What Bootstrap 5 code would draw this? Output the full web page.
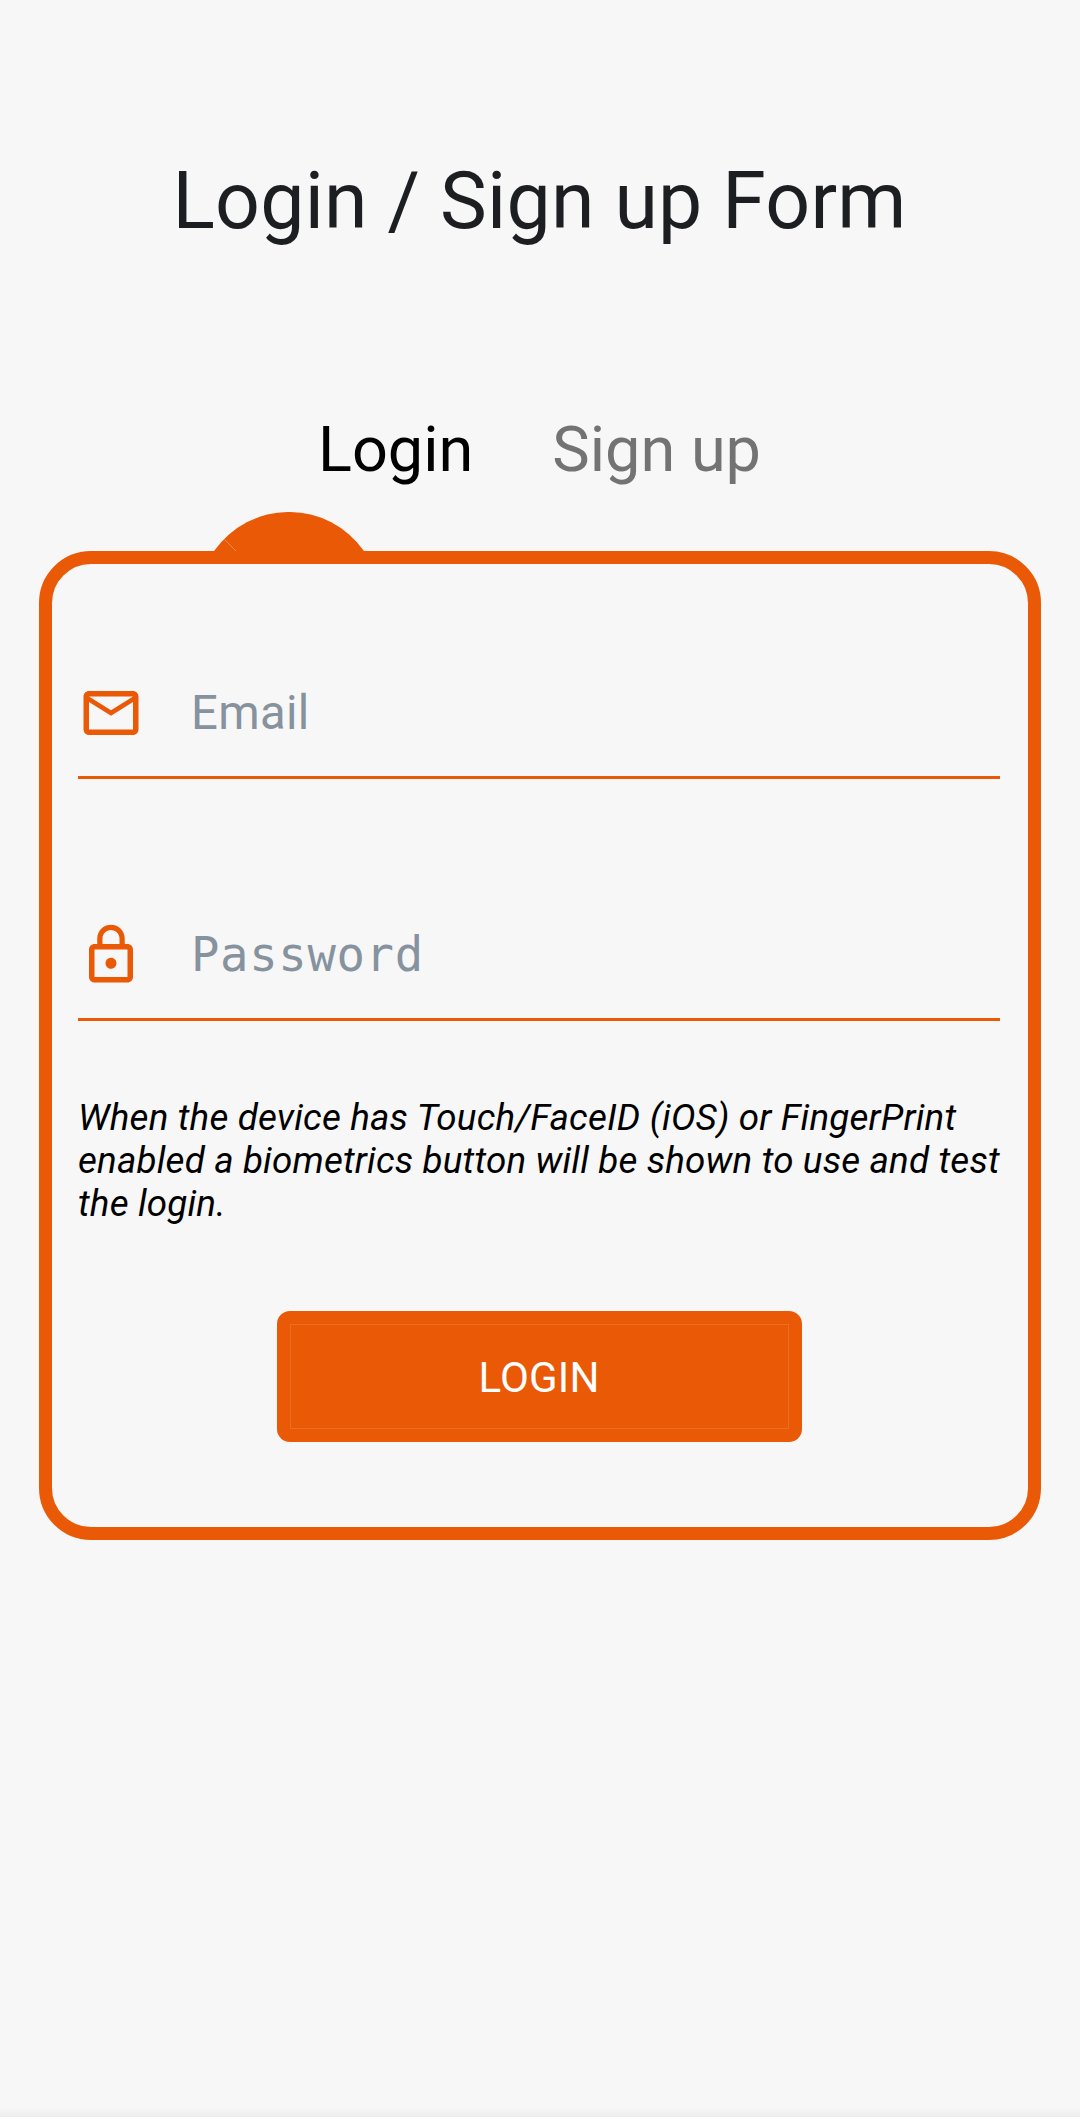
<!DOCTYPE html>
<html lang="en">
<head>
<meta charset="utf-8">
<meta name="viewport" content="width=device-width, initial-scale=1">
<title>Login / Sign up Form</title>
<link href="https://cdn.jsdelivr.net/npm/bootstrap@5.3.0/dist/css/bootstrap.min.css" rel="stylesheet">
<style>
:root { --brand: #ea5906; --page: #f7f7f7; }
body { font-family: Roboto, "Liberation Sans", sans-serif; background: var(--page); color: #000; }
.screen { height: 2117px; padding: 155px 39px 0; }
.screen-title { font-size: 78.75px; line-height: 92px; font-weight: 400; color: #1c1e22; letter-spacing: .24px; padding-right: 1px; }
.auth-tabs { margin-top: 166px; gap: 79px; padding-right: 1px; }
.auth-tabs .nav-link { font-size: 63px; line-height: 74px; color: #737373; }
.auth-tabs .nav-link.active { color: #000; }
.panel { margin-top: 64px; height: 989px; border: 13px solid var(--brand); border-radius: 52px; padding: 80px 28px 0 26px; }
.bump { left: 162px; top: -52px; width: 150px; height: 39px; }
.field { height: 135px; padding-top: 6px; border-bottom: 3px solid var(--brand); }
.field + .field { margin-top: 107px; }
.field svg { width: 66px; height: 66px; }
.field .form-control { font-size: 47.25px; line-height: 60px; margin-left: 47px; letter-spacing: .3px; }
.field .form-control::placeholder { color: #86939e; opacity: 1; }
.field .mono { font-family: "DejaVu Sans Mono", monospace; font-size: 47.25px; letter-spacing: .65px; }
.note { font-size: 36.75px; line-height: 43px; margin-top: 75px; white-space: nowrap; letter-spacing: .18px; }
.login-btn { width: 525px; height: 131px; margin-top: 86px; padding: 13px; border-radius: 13px; background: var(--brand) !important; color: #fff !important; font-size: 42px; line-height: 50px; letter-spacing: .2px; }
.login-btn span { border: 1px solid #ec6e26; padding-top: 3px; }
.bottom-edge { height: 9px; background: linear-gradient(#f7f7f7, #ececec); }
</style>
<script src="https://cdn.jsdelivr.net/npm/bootstrap@5.3.0/dist/js/bootstrap.bundle.min.js"></script>
</head>
<body class="overflow-hidden">
<main class="screen position-relative">
  <h1 class="screen-title text-center m-0"><span>Login / Sign up Form</span></h1>
  <ul class="auth-tabs nav justify-content-center">
    <li class="nav-item"><a class="nav-link active p-0" href="#"><span>Login</span></a></li>
    <li class="nav-item"><a class="nav-link p-0" href="#"><span>Sign up</span></a></li>
  </ul>
  <form class="panel position-relative">
    <svg class="bump position-absolute" viewBox="0 0 150 39" aria-hidden="true">
      <path d="M0 39A91.6 91.6 0 0 1 150 39Z" fill="#ea5906"/>
      <path d="M10.5 27.5L22 39" stroke="#f19661" stroke-width=".8"/>
    </svg>
    <div class="field d-flex align-items-center">
      <svg viewBox="0 0 24 24" fill="#ea5906" class="flex-shrink-0" aria-hidden="true"><path d="M22 6c0-1.100-.9-2-2-2H4c-1.100 0-2 .9-2 2v12c0 1.100.9 2 2 2h16c1.100 0 2-.9 2-2V6zm-2 0-8 5-8-5h16zm0 12H4V8l8 5 8-5v10z"/></svg>
      <input type="text" class="form-control border-0 bg-transparent p-0" placeholder="Email">
    </div>
    <div class="field d-flex align-items-center">
      <svg viewBox="0 0 24 24" fill="#ea5906" class="flex-shrink-0" aria-hidden="true"><path d="M12 17c1.100 0 2-.9 2-2s-.9-2-2-2-2 .9-2 2 .9 2 2 2zm6-9h-1V6c0-2.760-2.240-5-5-5S7 3.240 7 6v2H6c-1.100 0-2 .9-2 2v10c0 1.100.9 2 2 2h12c1.100 0 2-.9 2-2V10c0-1.100-.9-2-2-2zM8.900 6c0-1.710 1.390-3.100 3.100-3.100s3.100 1.390 3.100 3.100v2H8.900V6zM18 20H6V10h12v10z"/></svg>
      <input type="password" class="form-control mono border-0 bg-transparent p-0" placeholder="Password">
    </div>
    <p class="note fst-italic mb-0">When the device has Touch/FaceID (iOS) or FingerPrint<br>enabled a biometrics button will be shown to use and test<br>the login.</p>
    <button type="button" class="login-btn btn border-0 d-flex mx-auto"><span class="w-100 h-100 d-flex align-items-center justify-content-center">LOGIN</span></button>
  </form>
  <div class="bottom-edge position-absolute bottom-0 start-0 w-100"></div>
</main>
</body>
</html>
